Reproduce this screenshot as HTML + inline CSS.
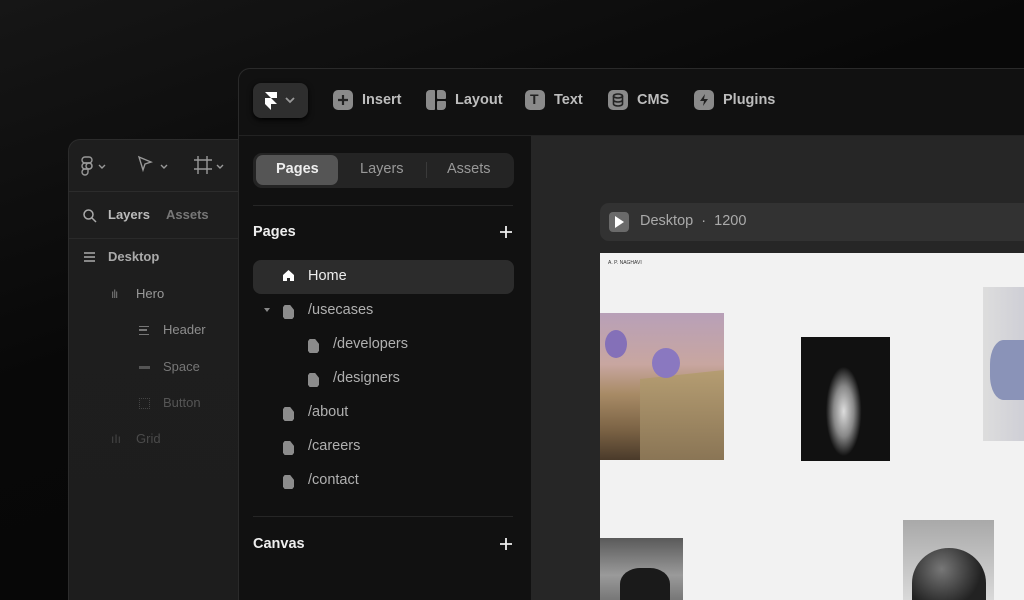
<!DOCTYPE html>
<html><head><meta charset="utf-8"><style>
*{margin:0;padding:0;box-sizing:border-box}
html,body{width:1024px;height:600px;overflow:hidden}
body{background:linear-gradient(160deg,#161616 0%,#080808 40%,#050505 100%);font-family:"Liberation Sans",sans-serif;position:relative;line-height:1.4}
.abs{position:absolute}
.back{left:68px;top:139px;width:200px;height:461px;border-radius:12px 0 0 0;background:linear-gradient(180deg,#1e1e1e,#1d1d1d);border:1px solid #2c2c2c;border-bottom:none;overflow:hidden}
.bt{color:#9a9a9a;font-size:13px}
.main{left:238px;top:68px;width:786px;height:532px;border-radius:12px 0 0 0;background:#111;border:1px solid #2a2a2a;border-bottom:none;border-right:none;overflow:hidden}
.tb{color:#bdbdbd;font-size:14.5px;font-weight:bold}
.ic{position:absolute;width:20px;height:20px;border-radius:5px;background:#8a8a8a}
.pg{position:absolute;color:#b0b0b0;font-size:14.5px}
.doc{position:absolute;width:11px;height:14px;background:#8c8c8c;clip-path:polygon(0 15%,15% 0,65% 0,100% 35%,100% 85%,85% 100%,15% 100%,0 85%)}
</style></head><body>
<div class="abs back">
  <div style="position:absolute;left:0;top:51px;width:100%;height:1px;background:#2c2c2c"></div>
  <div style="position:absolute;left:0;top:98px;width:100%;height:1px;background:#2a2a2a"></div>
  <svg class="abs" style="left:11px;top:15px" width="60" height="22" fill="none" stroke="#999" stroke-width="1.4"><rect x="2" y="2" width="10" height="6" rx="3"/><rect x="2" y="8" width="10" height="6" rx="3"/><path d="M2 17a3 3 0 0 0 6 0v-3H5a3 3 0 0 0-3 3"/><circle cx="9" cy="11" r="3"/><path d="M19 10l3 3 3-3"/></svg>
  <svg class="abs" style="left:68px;top:15px" width="40" height="22" fill="none" stroke="#999" stroke-width="1.4"><path d="M2 2l12 5-6 2-2 6z"/><path d="M24 10l3 3 3-3"/></svg>
  <svg class="abs" style="left:124px;top:15px" width="40" height="22" fill="none" stroke="#999" stroke-width="1.4"><path d="M5 1v18M14 1v18M1 5h18M1 14h18"/><path d="M24 10l3 3 3-3"/></svg>
  <svg class="abs" style="left:13px;top:68px" width="16" height="16" fill="none" stroke="#aaa" stroke-width="1.5"><circle cx="6.5" cy="6.5" r="4.5"/><path d="M10 10l4 4"/></svg>
  <div class="abs bt" style="left:39px;top:66px;color:#bbb;font-weight:bold">Layers</div>
  <div class="abs bt" style="left:97px;top:66px;color:#777;font-weight:bold">Assets</div>
  <div class="abs" style="left:15px;top:112px;width:11px;height:10px;border-top:2px solid #888;border-bottom:2px solid #888"><div style="margin-top:2px;height:2px;background:#888"></div></div>
  <div class="abs bt" style="left:39px;top:108px;color:#aaa;font-weight:bold">Desktop</div>
  <div class="abs" style="left:42px;top:146px;color:#777;font-size:12px;letter-spacing:-1px">ılı</div>
  <div class="abs bt" style="left:67px;top:145px;color:#999">Hero</div>
  <div class="abs" style="left:70px;top:186px;width:10px;height:9px;border-top:1.5px solid #777;border-bottom:1.5px solid #777"><div style="margin-top:2px;height:1.5px;background:#777;width:8px"></div></div>
  <div class="abs bt" style="left:94px;top:181px;color:#8e8e8e">Header</div>
  <div class="abs" style="left:70px;top:226px;width:11px;height:3px;background:#555"></div>
  <div class="abs bt" style="left:94px;top:218px;color:#777">Space</div>
  <div class="abs" style="left:70px;top:258px;width:11px;height:11px;border:1px dotted #444"></div>
  <div class="abs bt" style="left:94px;top:254px;color:#555">Button</div>
  <div class="abs" style="left:42px;top:291px;color:#444;font-size:12px">ıIı</div>
  <div class="abs bt" style="left:67px;top:290px;color:#4a4a4a">Grid</div>
</div>

<div class="abs main">
  <div class="abs" style="left:14px;top:14px;width:55px;height:35px;border-radius:8px;background:#2e2e2e;box-shadow:0 2px 6px #000"></div>
  <svg class="abs" style="left:25px;top:22px" width="14" height="19"><path d="M1 1h12v6H7zM1 7h6l6 6H7v6L1 13z" fill="#fff"/></svg>
  <svg class="abs" style="left:46px;top:27px" width="10" height="8" fill="none" stroke="#999" stroke-width="1.8"><path d="M1 2l4 4 4-4"/></svg>
  <div class="ic" style="left:94px;top:21px"></div>
  <svg class="abs" style="left:97px;top:24px" width="14" height="14" stroke="#222" stroke-width="2.2"><path d="M7 2v10M2 7h10"/></svg>
  <div class="abs tb" style="left:123px;top:21px">Insert</div>
  <div class="abs" style="left:187px;top:21px;width:9px;height:20px;border-radius:4px 1px 1px 4px;background:#8a8a8a"></div>
  <div class="abs" style="left:198px;top:21px;width:9px;height:9px;border-radius:1px 4px 1px 1px;background:#8a8a8a"></div>
  <div class="abs" style="left:198px;top:32px;width:9px;height:9px;border-radius:1px 1px 4px 1px;background:#8a8a8a"></div>
  <div class="abs tb" style="left:216px;top:21px">Layout</div>
  <div class="ic" style="left:286px;top:21px"></div><div class="abs" style="left:291px;top:21px;color:#222;font-size:14px;font-weight:bold">T</div>
  <div class="abs tb" style="left:315px;top:21px">Text</div>
  <div class="ic" style="left:369px;top:21px"></div>
  <svg class="abs" style="left:373px;top:24px" width="12" height="14" fill="none" stroke="#222" stroke-width="1.6"><ellipse cx="6" cy="3" rx="4.5" ry="2"/><path d="M1.5 3v8c0 1 2 2 4.5 2s4.5-1 4.5-2V3M1.5 7c0 1 2 2 4.5 2s4.5-1 4.5-2"/></svg>
  <div class="abs tb" style="left:398px;top:21px">CMS</div>
  <div class="ic" style="left:455px;top:21px"></div>
  <svg class="abs" style="left:459px;top:24px" width="12" height="14"><path d="M7 1L2 8h4l-1 5 5-7H6z" fill="#222"/></svg>
  <div class="abs tb" style="left:484px;top:21px">Plugins</div>
  <div class="abs" style="left:0;top:66px;width:100%;height:1px;background:#222"></div>
  <div class="abs" style="left:292px;top:67px;width:520px;height:480px;background:#262626"></div>
  <div class="abs" style="left:14px;top:84px;width:261px;height:35px;border-radius:9px;background:#242424"></div>
  <div class="abs" style="left:17px;top:86px;width:82px;height:30px;border-radius:7px;background:#555"></div>
  <div class="abs" style="left:37px;top:90px;color:#eee;font-size:14.5px;font-weight:bold">Pages</div>
  <div class="abs" style="left:121px;top:90px;color:#999;font-size:14.5px">Layers</div>
  <div class="abs" style="left:187px;top:93px;width:1px;height:16px;background:#3a3a3a"></div>
  <div class="abs" style="left:208px;top:90px;color:#999;font-size:14.5px">Assets</div>
  <div class="abs" style="left:14px;top:136px;width:260px;height:1px;background:#262626"></div>
  <div class="abs" style="left:14px;top:153px;color:#eee;font-size:14.5px;font-weight:bold">Pages</div>
  <svg class="abs" style="left:261px;top:157px" width="12" height="12" stroke="#eee" stroke-width="1.8"><path d="M6 0v12M0 6h12"/></svg>
  <div class="abs" style="left:14px;top:191px;width:261px;height:34px;border-radius:8px;background:#2c2c2c"></div>
  <svg class="abs" style="left:43px;top:200px" width="13" height="13"><path d="M6.5 1L1 6v6h4V9h3v3h4V6z" fill="#fff"/></svg>
  <div class="abs" style="left:69px;top:197px;color:#eee;font-size:14.5px">Home</div>
  <div class="abs" style="left:25px;top:239px;width:0;height:0;border-left:3px solid transparent;border-right:3px solid transparent;border-top:4px solid #888"></div>
  <div class="doc" style="left:44px;top:236px"></div><div class="pg" style="left:69px;top:231px">/usecases</div>
  <div class="doc" style="left:69px;top:270px"></div><div class="pg" style="left:94px;top:265px">/developers</div>
  <div class="doc" style="left:69px;top:304px"></div><div class="pg" style="left:94px;top:299px">/designers</div>
  <div class="doc" style="left:44px;top:338px"></div><div class="pg" style="left:69px;top:333px">/about</div>
  <div class="doc" style="left:44px;top:372px"></div><div class="pg" style="left:69px;top:367px">/careers</div>
  <div class="doc" style="left:44px;top:406px"></div><div class="pg" style="left:69px;top:401px">/contact</div>
  <div class="abs" style="left:14px;top:447px;width:260px;height:1px;background:#262626"></div>
  <div class="abs" style="left:14px;top:465px;color:#eee;font-size:14.5px;font-weight:bold">Canvas</div>
  <svg class="abs" style="left:261px;top:469px" width="12" height="12" stroke="#eee" stroke-width="1.8"><path d="M6 0v12M0 6h12"/></svg>
</div>
<div class="abs" style="left:600px;top:203px;width:440px;height:38px;border-radius:9px;background:#323232"></div>
<div class="abs" style="left:609px;top:212px;width:20px;height:20px;border-radius:4px;background:#6a6a6a"></div>
<div class="abs" style="left:615px;top:216px;width:0;height:0;border-top:6px solid transparent;border-bottom:6px solid transparent;border-left:9px solid #fff"></div>
<div class="abs" style="left:640px;top:211px;color:#aaa;font-size:14.5px">Desktop &nbsp;·&nbsp; 1200</div>
<div class="abs" style="left:600px;top:253px;width:424px;height:347px;background:#f2f2f2;overflow:hidden">
<div class="abs" style="left:8px;top:7px;color:#333;font-size:5px">A. P. NAGHAVI</div>
<div class="abs" style="left:0;top:60px;width:124px;height:147px;background:linear-gradient(180deg,#b8a0b8 0%,#c8a6a0 35%,#a88b66 55%,#7a6244 80%,#4a3a2a 100%)"></div>
<div class="abs" style="left:40px;top:117px;width:84px;height:90px;background:linear-gradient(180deg,#b59d72,#8a7555);clip-path:polygon(0 10%,100% 0,100% 100%,0 100%)"></div>
<div class="abs" style="left:5px;top:77px;width:22px;height:28px;border-radius:50%;background:#8470b8"></div>
<div class="abs" style="left:52px;top:95px;width:28px;height:30px;border-radius:50%;background:#8a78c0"></div>
<div class="abs" style="left:201px;top:84px;width:89px;height:124px;background:radial-gradient(ellipse 25% 45% at 48% 60%,#ddd 0%,#888 45%,#111 80%),#0a0a0a"></div>
<div class="abs" style="left:383px;top:34px;width:41px;height:154px;background:linear-gradient(90deg,#ddd,#cfcfd6)"></div>
<div class="abs" style="left:390px;top:87px;width:34px;height:60px;border-radius:40% 0 0 40%;background:#8a93b8"></div>
<div class="abs" style="left:0;top:285px;width:83px;height:62px;background:linear-gradient(180deg,#5a5a5a,#9a9a9a 60%,#777)"></div>
<div class="abs" style="left:20px;top:315px;width:50px;height:40px;border-radius:40% 40% 0 0;background:#1a1a1a"></div>
<div class="abs" style="left:303px;top:267px;width:91px;height:80px;background:linear-gradient(180deg,#a9a9a9,#d9d9d9)"></div>
<div class="abs" style="left:312px;top:295px;width:74px;height:70px;border-radius:50% 50% 20% 20%;background:radial-gradient(circle at 40% 30%,#777,#222 60%)"></div>
</div>
</body></html>
